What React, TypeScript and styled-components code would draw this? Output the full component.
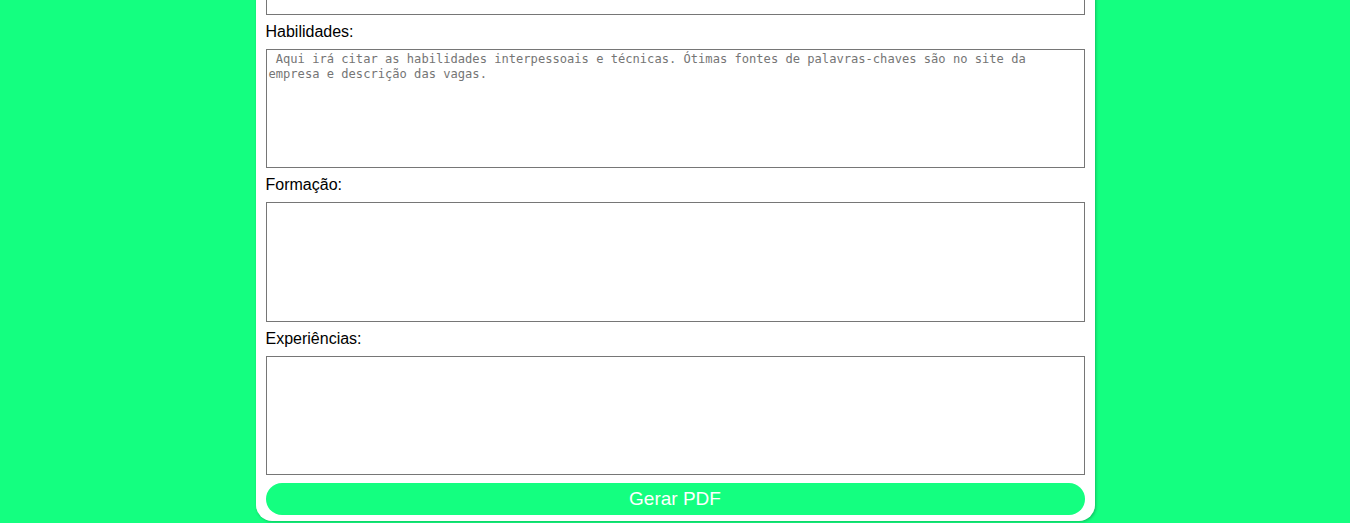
import React from "react";
import styled, { createGlobalStyle } from "styled-components";

const GREEN = "#14ff80";

const Global = createGlobalStyle`
  html, body {
    margin: 0;
    padding: 0;
    background: ${GREEN};
    overflow: hidden;
  }
  * { box-sizing: border-box; }
`;

const Viewport = styled.div`
  height: 100vh;
  display: flex;
  flex-direction: column;
  justify-content: flex-end;
  align-items: center;
  padding-bottom: 2px;
  overflow: hidden;
`;

const Card = styled.form`
  width: 839px;
  flex-shrink: 0;
  background: #ffffff;
  border-radius: 16px;
  box-shadow: 1px 1px 3px rgba(0, 0, 0, 0.25);
  padding: 10px 10px 6px 10px;
  display: flex;
  flex-direction: column;
  font-family: "Liberation Sans", Arial, sans-serif;
`;

const Title = styled.h1`
  margin: 8px 0 12px;
  text-align: center;
  font-size: 28px;
  font-weight: bold;
  color: #000;
`;

const Label = styled.label`
  display: block;
  height: 18px;
  line-height: 18px;
  margin: 8px 0;
  font-size: 16px;
  color: #000;
`;

const Input = styled.input`
  height: 24px;
  width: 100%;
  border: 1px solid #767676;
  padding: 1px 2px;
`;

const Area = styled.textarea`
  display: block;
  width: 100%;
  height: 119.5px;
  flex-shrink: 0;
  border: 1px solid #767676;
  border-radius: 0;
  padding: 2px;
  resize: none;
  font-family: "DejaVu Sans Mono", "Liberation Mono", monospace;
  font-size: 12.1px;
  line-height: 15px;
  color: #000;
  &::placeholder {
    color: #757575;
    opacity: 1;
  }
`;

const Button = styled.button`
  margin-top: 8px;
  height: 32px;
  width: 100%;
  border: none;
  border-radius: 16px;
  background: ${GREEN};
  color: #ffffff;
  font-family: "Liberation Sans", Arial, sans-serif;
  font-size: 19px;
  cursor: pointer;
`;

export default function App() {
  return (
    <>
      <Global />
      <Viewport>
        <Card onSubmit={(e) => e.preventDefault()}>
          <Title>Gerador de Currículo</Title>
          <Label>Nome:</Label>
          <Input type="text" />
          <Label>E-mail:</Label>
          <Input type="email" />
          <Label>Telefone:</Label>
          <Input type="tel" />
          <Label>Objetivo:</Label>
          <Area />
          <Label>Habilidades:</Label>
          <Area placeholder=" Aqui irá citar as habilidades interpessoais e técnicas. Ótimas fontes de palavras-chaves são no site da empresa e descrição das vagas." />
          <Label>Formação:</Label>
          <Area />
          <Label>Experiências:</Label>
          <Area />
          <Button type="submit">Gerar PDF</Button>
        </Card>
      </Viewport>
    </>
  );
}
